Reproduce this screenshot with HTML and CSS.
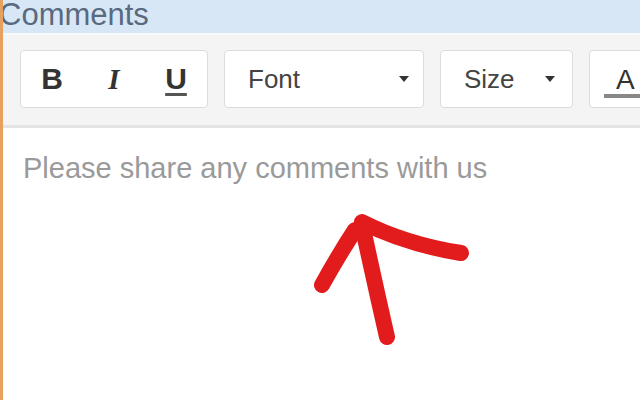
FILE: index.html
```html
<!DOCTYPE html>
<html lang="en">
<head>
  <meta charset="UTF-8">
  <title>Comments</title>
  <meta name="viewport" content="width=device-width, initial-scale=1">
  <link rel="stylesheet" href="styles.css">
</head>
<body>

  <div class="panel">
    <div class="panel-title">Comments</div>

    <div class="toolbar">
      <div class="group">
        <button class="tool bold">B</button>
        <button class="tool italic">I</button>
        <button class="tool under">U</button>
      </div>
      <div class="group select font">
        <span>Font</span>
        <span class="caret"></span>
      </div>
      <div class="group select size">
        <span>Size</span>
        <span class="caret"></span>
      </div>
      <div class="group color">
        <span class="color-a">A</span>
      </div>
    </div>

    <div class="editor">
      <div class="placeholder">Please share any comments with us</div>

      <!-- hand drawn arrow on top of the editor -->
      <svg class="arrow" width="640" height="272" viewBox="0 128 640 272">
        <path d="M387 337 Q374 280 362 224" />
        <path d="M322 285 Q338 256 355 230" />
        <path d="M362 222 Q405 244 461 253" />
      </svg>
    </div>
  </div>

</body>
</html>
```

FILE: styles.css
```css
body {
  margin: 0;
  background-color: #fff;
  font-family: 'Liberation Sans', Arial, sans-serif;
}

.panel {
  display: flex;
  flex-direction: column;
  height: 400px;
  border-left: 3px solid #e8a060;
  overflow: hidden;
}

.panel-title {
  height: 33px;
  line-height: 30px;
  background-color: #d8e7f6;
  border-bottom: 2px solid #f8f9fa;
  color: #5a6a7e;
  font-size: 31px;
  text-indent: -4px;
}

.toolbar {
  display: flex;
  gap: 16px;
  height: 75px;
  padding: 15px 0 0 17px;
  background-color: #f4f4f4;
  border-bottom: 3px solid #e4e4e4;
}

.group {
  display: flex;
  flex-shrink: 0;
  height: 56px;
  background-color: #fff;
  border: 1px solid #dcdcdc;
  border-radius: 4px;
}

.tool {
  width: 62px;
  padding: 0;
  background: none;
  border: none;
  color: #333;
  font-family: 'Liberation Sans', Arial, sans-serif;
  font-size: 30px;
  cursor: pointer;
}

.tool.bold {
  font-weight: bold;
}

.tool.italic {
  font-family: 'Liberation Serif', serif;
  font-weight: bold;
  font-style: italic;
  font-size: 29px;
}

.tool.under {
  font-weight: bold;
  text-decoration: underline;
  text-decoration-thickness: 3px;
  text-underline-offset: 4px;
  text-decoration-color: #555;
}

.select {
  align-items: center;
  justify-content: space-between;
  padding: 0 14px 0 23px;
  color: #444;
  font-size: 26px;
}

.font {
  width: 161px;
}

.size {
  width: 91px;
  padding-right: 17px;
}

.caret {
  width: 0;
  height: 0;
  border-left: 5px solid transparent;
  border-right: 5px solid transparent;
  border-top: 6px solid #333;
}

.color {
  width: 80px;
  align-items: center;
  padding-left: 14px;
}

.color-a {
  display: inline-block;
  padding: 0 6px 0 12px;
  color: #333;
  font-size: 28px;
  border-bottom: 4px solid #888;
  line-height: 28px;
  margin-top: 6px;
}

.editor {
  position: relative;
  flex: 1;
  background-color: #fff;
}

.placeholder {
  padding: 24px 0 0 20px;
  color: #9a9a9a;
  font-size: 29px;
}

.arrow {
  position: absolute;
  left: -3px;
  top: 0;
}

.arrow path {
  fill: none;
  stroke: #e21b1d;
  stroke-width: 16;
  stroke-linecap: round;
}
```
